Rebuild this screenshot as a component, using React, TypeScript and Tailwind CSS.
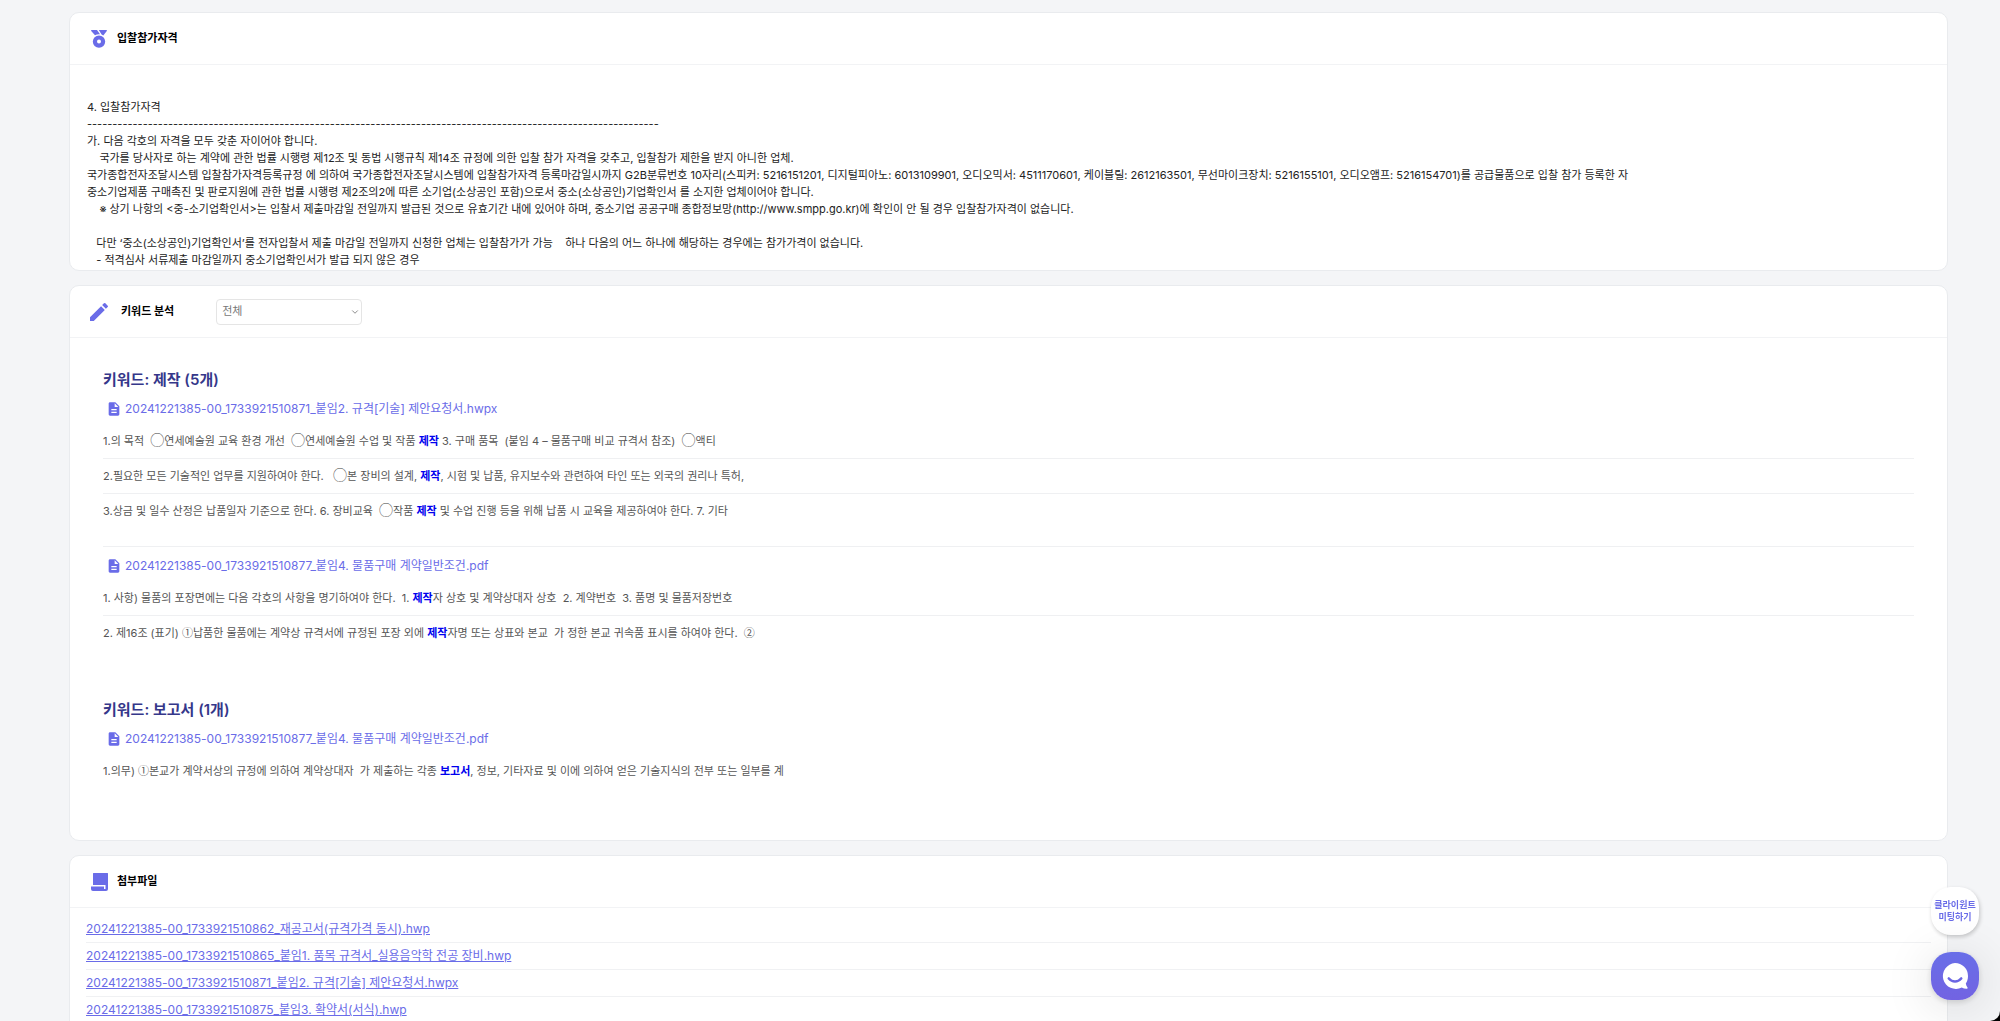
import clsx from "clsx";
import type { ReactNode } from "react";
import { FiChevronDown } from "react-icons/fi";
import { MdDescription, MdEdit } from "react-icons/md";

const qualification = [
  "4. 입찰참가자격",
  "-".repeat(113),
  "가. 다음 각호의 자격을 모두 갖춘 자이어야 합니다.",
  "    국가를 당사자로 하는 계약에 관한 법률 시행령 제12조 및 동법 시행규칙 제14조 규정에 의한 입찰 참가 자격을 갖추고, 입찰참가 제한을 받지 아니한 업체.",
  "국가종합전자조달시스템 입찰참가자격등록규정 에 의하여 국가종합전자조달시스템에 입찰참가자격 등록마감일시까지 G2B분류번호 10자리(스피커: 5216151201, 디지털피아노: 6013109901, 오디오믹서: 4511170601, 케이블릴: 2612163501, 무선마이크장치: 5216155101, 오디오앰프: 5216154701)를 공급물품으로 입찰 참가 등록한 자",
  "중소기업제품 구매촉진 및 판로지원에 관한 법률 시행령 제2조의2에 따른 소기업(소상공인 포함)으로서 중소(소상공인)기업확인서 를 소지한 업체이어야 합니다.",
  "    ※ 상기 나항의 <중-소기업확인서>는 입찰서 제출마감일 전일까지 발급된 것으로 유효기간 내에 있어야 하며, 중소기업 공공구매 종합정보망(http://www.smpp.go.kr)에 확인이 안 될 경우 입찰참가자격이 없습니다.",
  "",
  "   다만 ‘중소(소상공인)기업확인서’를 전자입찰서 제출 마감일 전일까지 신청한 업체는 입찰참가가 가능    하나 다음의 어느 하나에 해당하는 경우에는 참가가격이 없습니다.",
  "   - 적격심사 서류제출 마감일까지 중소기업확인서가 발급 되지 않은 경우",
].join("\n");

const keywords = [
  {
    word: "제작",
    count: 5,
    files: [
      {
        name: "20241221385-00_1733921510871_붙임2. 규격[기술] 제안요청서.hwpx",
        lines: [
          "1.의 목적  ◯연세예술원 교육 환경 개선  ◯연세예술원 수업 및 작품 제작 3. 구매 품목  (붙임 4 – 물품구매 비교 규격서 참조)  ◯액티",
          "2.필요한 모든 기술적인 업무를 지원하여야 한다.   ◯본 장비의 설계, 제작, 시험 및 납품, 유지보수와 관련하여 타인 또는 외국의 권리나 특허,",
          "3.상금 및 일수 산정은 납품일자 기준으로 한다. 6. 장비교육  ◯작품 제작 및 수업 진행 등을 위해 납품 시 교육을 제공하여야 한다. 7. 기타",
        ],
      },
      {
        name: "20241221385-00_1733921510877_붙임4. 물품구매 계약일반조건.pdf",
        lines: [
          "1. 사항) 물품의 포장면에는 다음 각호의 사항을 명기하여야 한다.  1. 제작자 상호 및 계약상대자 상호  2. 계약번호  3. 품명 및 물품저장번호",
          "2. 제16조 (표기) ①납품한 물품에는 계약상 규격서에 규정된 포장 외에 제작자명 또는 상표와 본교  가 정한 본교 귀속품 표시를 하여야 한다.  ②",
        ],
      },
    ],
  },
  {
    word: "보고서",
    count: 1,
    files: [
      {
        name: "20241221385-00_1733921510877_붙임4. 물품구매 계약일반조건.pdf",
        lines: [
          "1.의무) ①본교가 계약서상의 규정에 의하여 계약상대자  가 제출하는 각종 보고서, 정보, 기타자료 및 이에 의하여 얻은 기술지식의 전부 또는 일부를 계",
        ],
      },
    ],
  },
];

const attachments = [
  "20241221385-00_1733921510862_재공고서(규격가격 동시).hwp",
  "20241221385-00_1733921510865_붙임1. 품목 규격서_실용음악학 전공 장비.hwp",
  "20241221385-00_1733921510871_붙임2. 규격[기술] 제안요청서.hwpx",
  "20241221385-00_1733921510875_붙임3. 확약서(서식).hwp",
];

function MedalIcon() {
  return (
    <svg width="16" height="18" viewBox="0 0 16 18" fill="currentColor">
      <path d="M.5 0H6l3 4.3a7 7 0 0 0-5 1L.2 1A.6.6 0 0 1 .5 0zM9 0h6.4c.5 0 .7.5.4.9L12.3 5.4a7 7 0 0 0-1.7-.9L7.8 0z" />
      <path
        fillRule="evenodd"
        d="M8 5.4a6.2 6.2 0 1 1 0 12.4A6.2 6.2 0 0 1 8 5.4zm0 4.2a2 2 0 1 0 0 4 2 2 0 0 0 0-4z"
      />
    </svg>
  );
}

function ScrollIcon() {
  return (
    <svg width="17" height="18" viewBox="0 0 17 18" fill="currentColor">
      <path d="M2.5 0H16.5a.5.5 0 0 1 .5.5V16a2 2 0 0 1-2 2H2a2 2 0 0 1-2-2v-2.5h13V16h1.5V12H2V.5a.5.5 0 0 1 .5-.5z" />
    </svg>
  );
}

function ChatIcon() {
  return (
    <svg width="26" height="26" viewBox="0 0 26 26" fill="none">
      <path
        fill="#fff"
        d="M13 0a13 13 0 0 1 13 13c0 3-.9 5.5-2.2 7.500.3 1.600.9 2.900 1.700 4 .4.600 0 1.300-.7 1.300-2 0-3.700-.4-5.100-1.200A13 13 0 1 1 13 0z"
      />
      <path d="M6.8 15.5c3.500 4 8.900 4 12.400 0" stroke="#6b66e3" strokeWidth="2.6" strokeLinecap="round" />
    </svg>
  );
}

type CardProps = { icon: ReactNode; title: string; extra?: ReactNode; children: ReactNode };

function Card({ icon, title, extra, children }: CardProps) {
  return (
    <section className="rounded-[10px] border border-[#e9ebee] bg-white">
      <header className="flex h-[52px] items-center border-b border-[#f2f3f5] px-[15px]">
        <span className="flex w-7 justify-center text-[#6a6ce8]">{icon}</span>
        <h2 className={clsx("text-[11px] font-bold text-black", extra ? "ml-2" : "ml-1")}>{title}</h2>
        {extra}
      </header>
      {children}
    </section>
  );
}

function Highlighted({ text, word }: { text: string; word: string }) {
  return (
    <p className="flex h-[35px] items-center border-b border-[#eff0f2] text-[11px] text-[#555] last:border-transparent">
      <span className="whitespace-pre">
        {text.split(new RegExp(`(${word}|[◯①②])`)).map((part, i) => {
          if (part == word) {
            return (
              <strong key={i} className="font-bold text-[#0000ee]">
                {part}
              </strong>
            );
          }
          if (/^[◯①②]$/.test(part)) {
            return (
              <span
                key={i}
                className={clsx("font-['Noto_Sans_CJK_KR',sans-serif] leading-none", part == "◯" && "text-[14px]")}
              >
                {part}
              </span>
            );
          }
          return part;
        })}
      </span>
    </p>
  );
}

export default function App() {
  return (
    <div className="bg-black font-['Inter','Noto_Sans_CJK_KR',sans-serif]">
      <div className="h-screen overflow-hidden rounded-br-[10px] bg-[#f4f5f7]">
        <main className="mr-[52px] ml-[69px] flex flex-col gap-[14px] pt-[12px]">
          <Card icon={<MedalIcon />} title="입찰참가자격">
            <div className="h-[205px] overflow-hidden px-[17px] pt-[34px]">
              <pre className="font-['Inter','Noto_Sans_CJK_KR',sans-serif] text-[11px] leading-[17px] text-[#222]">
                {qualification}
              </pre>
            </div>
          </Card>

          <Card
            icon={<MdEdit size={24} />}
            title="키워드 분석"
            extra={
              <div className="relative ml-[42px]">
                <select
                  aria-label="키워드 선택"
                  className="block h-[26px] w-[146px] appearance-none rounded border border-[#e5e5e5] bg-white px-[5px] text-[11px] text-[#777]"
                >
                  <option>전체</option>
                </select>
                <FiChevronDown size={10} className="pointer-events-none absolute top-2 right-[2px] text-[#777]" />
              </div>
            }
          >
            <div className="px-[33px] pt-8 pb-[2px]">
              {keywords.map((k) => (
                <div key={k.word} className="pb-[31px]">
                  <h3 className="text-[15px] leading-5 font-semibold text-[#35378a]">
                    키워드: {k.word} ({k.count}개)
                  </h3>
                  {k.files.map((f) => (
                    <div key={f.name} className="border-b border-[#eff0f2] pb-[17px] last:border-transparent">
                      <a
                        href="#"
                        className="ml-[3px] flex h-[34px] items-center gap-[3px] pt-[3px] text-[12px] text-[#6a6ce8]"
                      >
                        <MdDescription size={16} />
                        {f.name}
                      </a>
                      {f.lines.map((line) => (
                        <Highlighted key={line} text={line} word={k.word} />
                      ))}
                    </div>
                  ))}
                </div>
              ))}
            </div>
          </Card>

          <Card icon={<ScrollIcon />} title="첨부파일">
            <ul className="px-4 pt-2 pb-20">
              {attachments.map((name) => (
                <li key={name} className="flex h-[27px] items-center border-b border-[#f0f1f3]">
                  <a href="#" className="text-[12px] text-[#6a6ce8] underline">
                    {name}
                  </a>
                </li>
              ))}
            </ul>
          </Card>
        </main>
      </div>

      <div className="fixed right-[21px] bottom-[21px] flex flex-col gap-[17px]">
        <button className="h-12 w-12 rounded-[20px] bg-white text-[9px] leading-[12px] font-bold whitespace-nowrap text-[#6a6ce8] shadow-[1px_2px_4px_rgba(0,0,0,0.2)]">
          클라이원트
          <br />
          미팅하기
        </button>
        <button
          aria-label="채팅 상담"
          className="flex h-12 w-12 items-center justify-center rounded-[20px] bg-linear-to-b from-[#686ee8] to-[#7263e2] shadow-[0_2px_6px_rgba(0,0,0,0.15),0_6px_50px_rgba(0,0,0,0.14)]"
        >
          <ChatIcon />
        </button>
      </div>
    </div>
  );
}
